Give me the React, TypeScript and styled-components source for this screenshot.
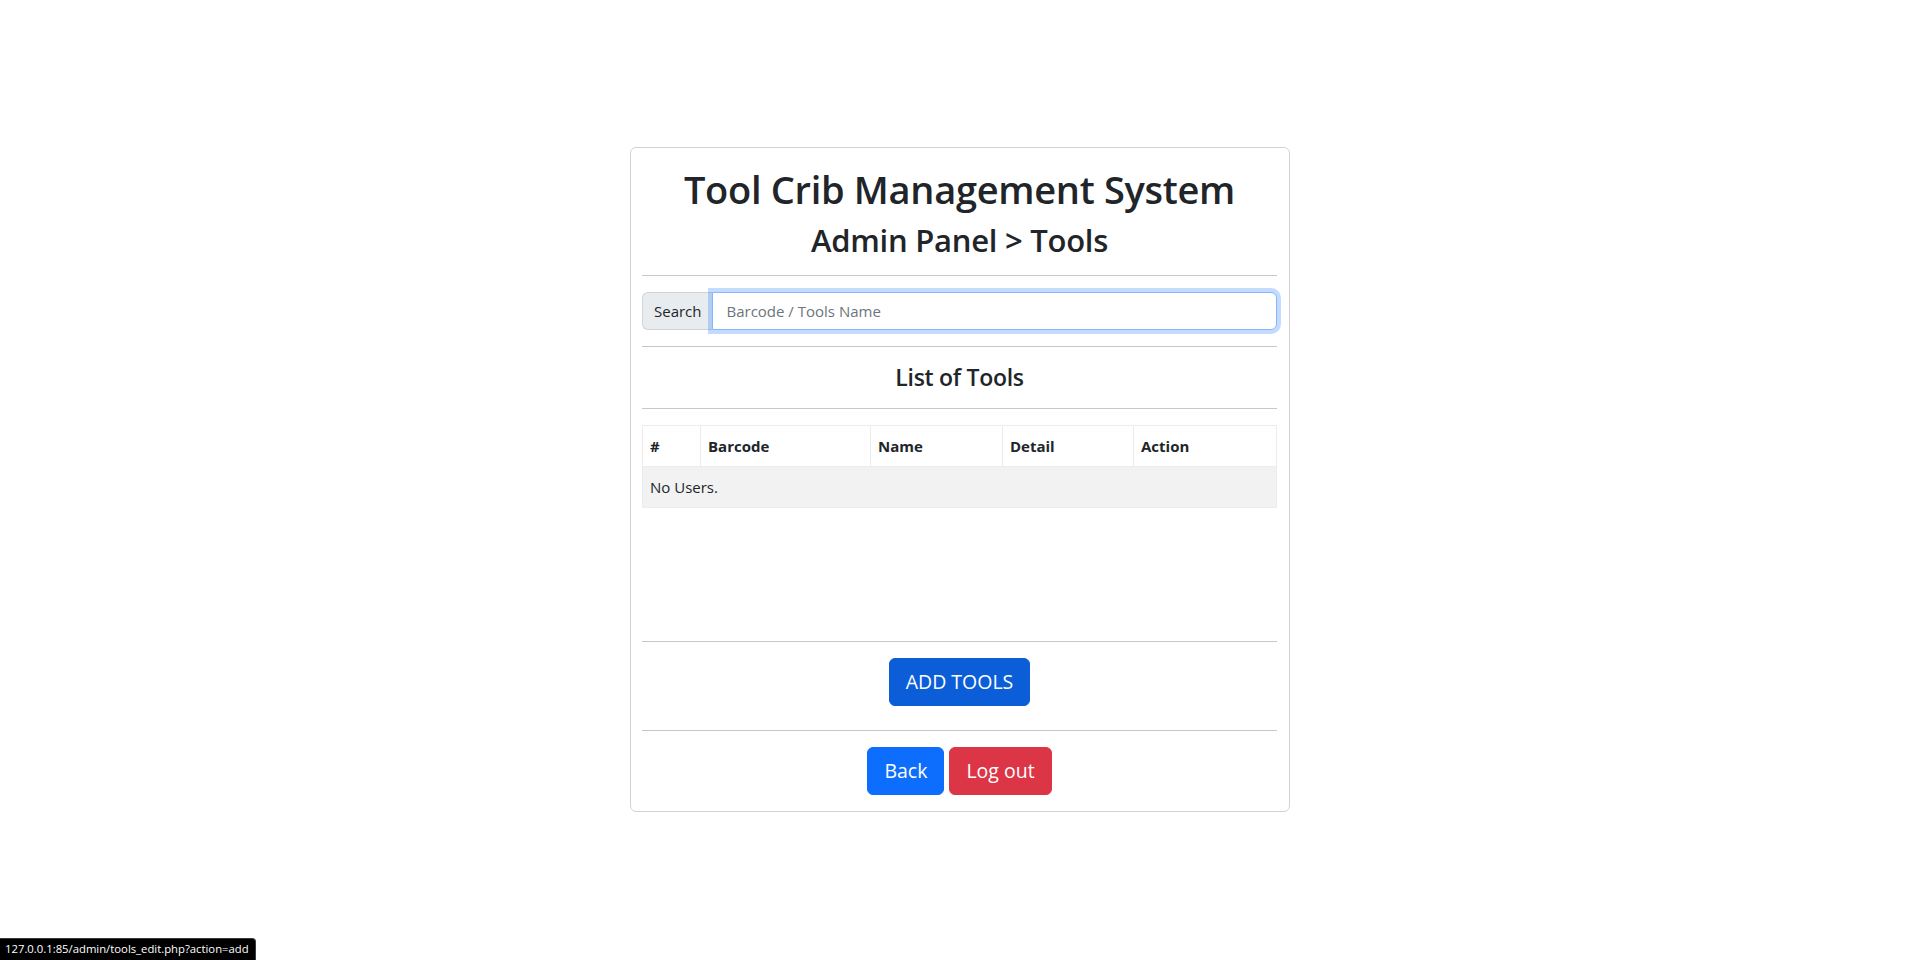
import React from "react";
import styled, { createGlobalStyle } from "styled-components";

const FONT = `"Open Sans", "Noto Sans", "Liberation Sans", sans-serif`;

const GlobalStyle = createGlobalStyle`
  *, *::before, *::after { box-sizing: border-box; }
  html, body { margin: 0; padding: 0; background: #fff; }
  body {
    font-family: ${FONT};
    font-size: 15px;
    line-height: 1.5;
    color: #212529;
  }
`;

const Page = styled.main`
  display: flex;
  justify-content: center;
  align-items: flex-start;
  padding-top: 147px;
  min-height: 960px;
`;

const Card = styled.section`
  width: 660px;
  border: 1px solid rgba(0, 0, 0, 0.175);
  border-radius: 6px;
  padding: 17px 12px 16px 11px;
  display: flex;
  flex-direction: column;
`;

const Title = styled.h1`
  margin: 0 0 8px;
  font-size: 38px;
  font-weight: 600;
  letter-spacing: -0.3px;
  line-height: 48px;
  text-align: center;
`;

const Subtitle = styled.h2`
  margin: 0;
  font-size: 31px;
  font-weight: 600;
  letter-spacing: -0.25px;
  line-height: 38px;
  text-align: center;
`;

const Rule = styled.hr`
  margin: 16px 0;
  border: 0;
  border-top: 1px solid #212529;
  opacity: 0.25;
`;

const InputGroup = styled.div`
  display: flex;
  align-items: stretch;
  height: 38px;
`;

const Addon = styled.span`
  display: flex;
  align-items: center;
  padding: 6px 10px 6px 11px;
  font-size: 15px;
  background: #e9ecef;
  border: 1px solid #ced4da;
  border-right: 0;
  border-radius: 6px 0 0 6px;
  color: #212529;
`;

const SearchInput = styled.input`
  flex: 1;
  min-width: 0;
  padding: 6px 14px;
  font-family: ${FONT};
  font-size: 15px;
  color: #212529;
  border: 1px solid #86b7fe;
  border-radius: 0 6px 6px 0;
  outline: 0;
  box-shadow: 0 0 0 4px rgba(13, 110, 253, 0.25);
  &::placeholder { color: #6c757d; }
`;

const SectionTitle = styled.h4`
  margin: 0;
  font-size: 23px;
  font-weight: 600;
  letter-spacing: -0.3px;
  line-height: 29px;
  text-align: center;
`;

const TableWrap = styled.div`
  height: 200px;
  overflow: auto;
`;

const Table = styled.table`
  width: 100%;
  border-collapse: collapse;
  font-size: 15px;
  border: 1px solid #ececec;
`;

const Th = styled.th<{ $w?: number }>`
  width: ${(p) => (p.$w ? `${p.$w}px` : "auto")};
  text-align: left;
  padding: 8px 7px;
  height: 41px;
  font-weight: 700;
  border: 1px solid #ececec;
  background: #fff;
`;

const Td = styled.td`
  padding: 8px 7px;
  height: 41px;
  background: #f2f2f2;
  border: 1px solid #ececec;
`;

const Center = styled.div<{ $mb?: number }>`
  display: flex;
  justify-content: center;
  gap: 5px;
  margin-bottom: ${(p) => p.$mb ?? 0}px;
`;

const Button = styled.button<{ $bg: string }>`
  font-family: ${FONT};
  font-size: 19.5px;
  line-height: 30px;
  padding: 8px 16px;
  color: #fff;
  background: ${(p) => p.$bg};
  border: 1px solid ${(p) => p.$bg};
  border-radius: 6px;
  cursor: pointer;
`;

const StatusBar = styled.div`
  position: fixed;
  left: 0;
  bottom: 0;
  height: 22px;
  padding: 0 6px 0 5px;
  display: flex;
  align-items: center;
  background: #000;
  color: #fff;
  font-size: 11.3px;
  border-top-right-radius: 4px;
  border: 1px solid #3a3a3a;
  border-left: 0;
  border-bottom: 0;
`;

export default function App() {
  return (
    <>
      <GlobalStyle />
      <Page>
        <Card>
          <Title>Tool Crib Management System</Title>
          <Subtitle>Admin Panel &gt; Tools</Subtitle>
          <Rule />
          <InputGroup>
            <Addon>Search</Addon>
            <SearchInput placeholder="Barcode / Tools Name" />
          </InputGroup>
          <Rule />
          <SectionTitle>List of Tools</SectionTitle>
          <Rule />
          <TableWrap>
            <Table>
              <thead>
                <tr>
                  <Th $w={58}>#</Th>
                  <Th $w={170}>Barcode</Th>
                  <Th $w={132}>Name</Th>
                  <Th $w={131}>Detail</Th>
                  <Th>Action</Th>
                </tr>
              </thead>
              <tbody>
                <tr>
                  <Td colSpan={5}>No Users.</Td>
                </tr>
              </tbody>
            </Table>
          </TableWrap>
          <Rule />
          <Center $mb={8}>
            <Button $bg="#0b5ed7">ADD TOOLS</Button>
          </Center>
          <Rule />
          <Center>
            <Button $bg="#0d6efd">Back</Button>
            <Button $bg="#dc3545">Log out</Button>
          </Center>
        </Card>
      </Page>
      <StatusBar>127.0.0.1:85/admin/tools_edit.php?action=add</StatusBar>
    </>
  );
}
